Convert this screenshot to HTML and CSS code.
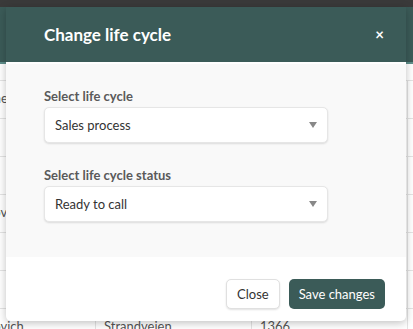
FILE: index.html
```html
<!DOCTYPE html>
<html lang="en">
<head>
    <meta charset="UTF-8">
    <meta name="viewport" content="width=device-width, initial-scale=1.0">
    <title>Change life cycle</title>
    <link rel="stylesheet" href="styles.css">
</head>
<body>
    <div class="topbar"></div>
    <div class="appbar"></div>

    <div class="table">
        <div class="row"><span class="cell c1 far">Name</span><span class="cell c2"></span><span class="cell c3"></span></div>
        <div class="row"><span class="cell c1"></span><span class="cell c2"></span><span class="cell c3"></span></div>
        <div class="row"><span class="cell c1"></span><span class="cell c2"></span><span class="cell c3"></span></div>
        <div class="row"><span class="cell c1">Jovi</span><span class="cell c2"></span><span class="cell c3"></span></div>
        <div class="row"><span class="cell c1"></span><span class="cell c2"></span><span class="cell c3"></span></div>
        <div class="row"><span class="cell c1"></span><span class="cell c2"></span><span class="cell c3"></span></div>
        <div class="row"><span class="cell c1">Jovich</span><span class="cell c2">Strandvejen</span><span class="cell c3">1366</span></div>
    </div>

    <div class="modal">
        <div class="modal-header">
            <h1>Change life cycle</h1>
            <span class="close-x">&times;</span>
        </div>
        <div class="modal-body">
            <label for="life-cycle">Select life cycle</label>
            <div class="select" id="life-cycle">
                <span>Sales process</span>
                <span class="arrow"></span>
            </div>

            <label for="life-cycle-status">Select life cycle status</label>
            <div class="select" id="life-cycle-status">
                <span>Ready to call</span>
                <span class="arrow"></span>
            </div>
        </div>
        <div class="modal-footer">
            <button class="btn btn-close" type="button">Close</button>
            <button class="btn btn-save" type="button">Save changes</button>
        </div>
    </div>
</body>
</html>
```

FILE: styles.css
```css
body {
    margin: 0;
    font-family: Lato, "Open Sans", sans-serif;
    color: #333;
    background-color: #fff;
    overflow: hidden;
}

.topbar {
    height: 7px;
    background-color: #3a3a3a;
}

.appbar {
    height: 55px;
    background-color: #3b5b58;
    border-bottom: 2px solid #5f8f8b;
}

.table {
    margin-top: 16px;
}

.row {
    display: flex;
    height: 37px;
    border-top: 1px solid #e4e4e4;
    font-size: 13px;
    color: #555;
}

.cell {
    padding: 9px 8px;
    border-right: 1px solid #e4e4e4;
    white-space: nowrap;
    overflow: hidden;
}

.c1 {
    width: 79px;
    text-indent: -20px;
}

.c1.far {
    text-indent: -34px;
}

.c2 {
    width: 139px;
}

.c3 {
    width: 139px;
}

.modal {
    position: absolute;
    left: 6px;
    top: 7px;
    width: 400px;
    background-color: #fff;
    border-radius: 0 0 5px 5px;
    box-shadow: 0 2px 8px rgba(0, 0, 0, 0.25);
}

.modal-header {
    display: flex;
    align-items: center;
    justify-content: space-between;
    height: 55px;
    padding: 0 22px 0 38px;
    background-color: #3b5b58;
    color: #fff;
}

.modal-header h1 {
    margin: 0;
    font-size: 17px;
    font-weight: bold;
}

.close-x {
    font-size: 15px;
    font-weight: bold;
    line-height: 1;
}

.modal-body {
    padding: 24px 38px 35px;
    margin-top: 2px;
    background-color: #f9f9f9;
}

label {
    display: block;
    margin-bottom: 3px;
    font-size: 13px;
    font-weight: bold;
    color: #5a5a5a;
}

.select {
    display: flex;
    align-items: center;
    justify-content: space-between;
    box-sizing: border-box;
    width: 284px;
    height: 36px;
    padding: 0 10px;
    margin-bottom: 24px;
    background-color: #fff;
    border: 1px solid #e6e6e6;
    border-radius: 5px;
    box-shadow: 0 1px 2px rgba(0, 0, 0, 0.12);
    font-size: 13px;
    color: #333;
}

.select:last-child {
    margin-bottom: 0;
}

.arrow {
    width: 0;
    height: 0;
    border-left: 4px solid transparent;
    border-right: 4px solid transparent;
    border-top: 6px solid #888;
}

.modal-footer {
    display: flex;
    justify-content: flex-end;
    gap: 9px;
    padding: 22px 21px 12px;
}

.btn {
    height: 30px;
    padding: 0 10px;
    font-family: Lato, "Open Sans", sans-serif;
    font-size: 13px;
    border-radius: 5px;
    cursor: pointer;
}

.btn-close {
    background-color: #fff;
    color: #333;
    border: 1px solid #e0e0e0;
    box-shadow: 0 1px 2px rgba(0, 0, 0, 0.12);
}

.btn-save {
    background-color: #3b5b58;
    color: #fff;
    border: none;
}
```
